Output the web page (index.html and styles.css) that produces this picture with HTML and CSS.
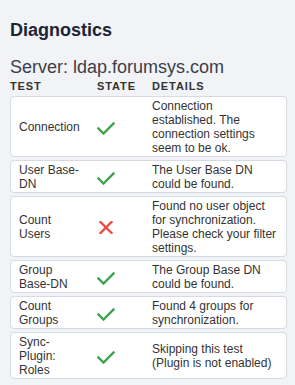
FILE: index.html
```html
<!DOCTYPE html>
<html lang="en">
<head>
  <meta charset="UTF-8">
  <title>Diagnostics</title>
  <link rel="stylesheet" href="styles.css">
</head>
<body>

<div class="panel">
  <h1>Diagnostics</h1>
  <div class="server">Server: ldap.forumsys.com</div>

  <div class="head">
    <span>Test</span>
    <span>State</span>
    <span>Details</span>
  </div>

  <div class="rows">
    <div class="row">
      <div class="test">Connection</div>
      <div class="state"><svg class="ok" width="18" height="13" viewBox="0 0 18 13"><path d="M1.5 6.5 L6.5 11.5 L16.5 1.5"/></svg></div>
      <div class="details">Connection established. The connection settings seem to be ok.</div>
    </div>
    <div class="row">
      <div class="test">User Base-DN</div>
      <div class="state"><svg class="ok" width="18" height="13" viewBox="0 0 18 13"><path d="M1.5 6.5 L6.5 11.5 L16.5 1.5"/></svg></div>
      <div class="details">The User Base DN could be found.</div>
    </div>
    <div class="row">
      <div class="test">Count Users</div>
      <div class="state"><svg class="fail" width="18" height="13" viewBox="0 0 18 13"><path d="M2.5 1 L13.5 12 M13.5 1 L2.5 12"/></svg></div>
      <div class="details">Found no user object for synchronization. Please check your filter settings.</div>
    </div>
    <div class="row">
      <div class="test">Group Base-DN</div>
      <div class="state"><svg class="ok" width="18" height="13" viewBox="0 0 18 13"><path d="M1.5 6.5 L6.5 11.5 L16.5 1.5"/></svg></div>
      <div class="details">The Group Base DN could be found.</div>
    </div>
    <div class="row">
      <div class="test">Count Groups</div>
      <div class="state"><svg class="ok" width="18" height="13" viewBox="0 0 18 13"><path d="M1.5 6.5 L6.5 11.5 L16.5 1.5"/></svg></div>
      <div class="details">Found 4 groups for synchronization.</div>
    </div>
    <div class="row">
      <div class="test">Sync-Plugin: Roles</div>
      <div class="state"><svg class="ok" width="18" height="13" viewBox="0 0 18 13"><path d="M1.5 6.5 L6.5 11.5 L16.5 1.5"/></svg></div>
      <div class="details">Skipping this test (Plugin is not enabled)</div>
    </div>
  </div>
</div>

</body>
</html>
```

FILE: styles.css
```css
body {
  margin: 0;
  background: #f1f3f6;
  font-family: "Liberation Sans", Arial, sans-serif;
  color: #333;
}
.panel { padding: 19px 8px 0 10px; }
h1 {
  margin: 0;
  font-size: 18px;
  line-height: 22px;
  font-weight: bold;
  color: #1c2536;
}
.server {
  margin-top: 15px;
  font-size: 18px;
  line-height: 22px;
  color: #3c4048;
}
.head {
  display: grid;
  grid-template-columns: 87px 55px 1fr;
  margin-top: 2px;
  font-size: 11px;
  line-height: 13px;
  font-weight: bold;
  letter-spacing: 0.9px;
  text-transform: uppercase;
  color: #333;
}
.rows {
  display: flex;
  flex-direction: column;
  gap: 3px;
  margin-top: 3px;
}
.row {
  display: grid;
  grid-template-columns: 78px 55px 1fr;
  align-items: center;
  padding: 2px 6px 1px 8px;
  background: #fff;
  border: 1px solid #d6dae1;
  border-radius: 4px;
  font-size: 12px;
  line-height: 14px;
  color: #333;
}
.test { padding-right: 14px; }
.state { display: flex; align-items: center; }
.state svg { fill: none; stroke-width: 2.4; stroke-linecap: square; }
.ok { stroke: #3fa34d; margin-top: 2px; }
.fail { stroke: #f04a42; margin-left: 1px; stroke-width: 2.2; }
```
